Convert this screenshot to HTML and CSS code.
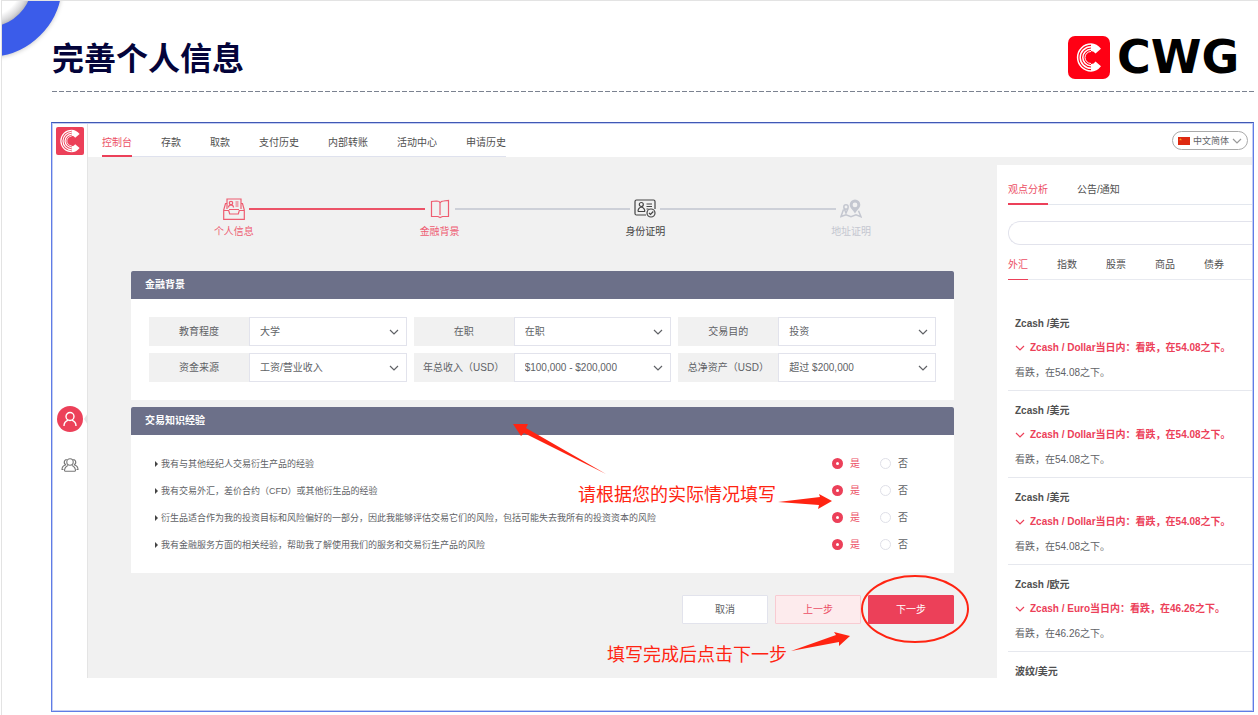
FILE: index.html
```html
<!DOCTYPE html>
<html lang="zh-CN">
<head>
<meta charset="utf-8">
<meta name="viewport" content="width=device-width, initial-scale=1">
<title>完善个人信息</title>
<link rel="stylesheet" href="styles.css">
</head>
<body>
<svg class="sprite" width="0" height="0" aria-hidden="true">
  <symbol id="chevron" viewBox="0 0 10 10"><path d="M1 3l4 4 4-4" fill="none" stroke="currentColor" stroke-width="1.200"/></symbol>
  <symbol id="mark" viewBox="0 0 42 43">
    <g fill="none" stroke="#fff" stroke-width="1.500">
      <path d="M23 8.100A13.400 13.400 0 0 0 23 34.900"/>
      <path d="M23 10.700A10.800 10.800 0 0 0 23 32.300"/>
      <path d="M23 13.300A8.200 8.200 0 0 0 23 29.700"/>
      <path d="M23 15.500A6 6 0 0 0 23 27.500" stroke-width="1"/>
    </g>
    <path d="M23 7.300Q29 7.600 33 12.800L27.500 17.500Q26 15 23 15zM23 35.700Q29 35.400 33 30.200L27.500 25.500Q26 28 23 28z" fill="#fff"/>
  </symbol>
</svg>
<div class="slide">
  <svg class="ring" width="72" height="68" viewBox="0 0 72 68" aria-hidden="true">
    <defs><radialGradient id="hole" cx="-14" cy="-18" r="46" gradientUnits="userSpaceOnUse">
      <stop offset=".72" stop-color="#fff"/><stop offset="1" stop-color="#bdbdc0"/>
    </radialGradient></defs>
    <circle cx="-14" cy="-18" r="46" fill="url(#hole)"/>
    <circle class="ring-band" cx="-14" cy="-18" r="59" fill="none" stroke="#3b5cea" stroke-width="30"/>
  </svg>

  <header class="slide-head">
    <h1 class="slide-title">完善个人信息</h1>
    <div class="brand">
      <svg class="brand-mark" width="42" height="43" viewBox="0 0 42 43" aria-hidden="true">
        <rect width="42" height="43" rx="7" fill="#ff0014"/><use href="#mark"/>
      </svg>
      <span class="brand-name">CWG</span>
    </div>
  </header>

  <div class="frame">
    <div class="app">
      <aside class="rail">
        <svg class="rail-logo" width="28" height="28" viewBox="0 0 28 28" aria-hidden="true">
          <rect width="28" height="28" rx="2" fill="#ec4059"/>
          <svg width="28" height="28" viewBox="4 4 34 35"><use href="#mark" width="42" height="43"/></svg>
        </svg>
        <nav class="rail-nav" aria-label="侧栏">
          <a class="rail-link rail-link-active" href="#" aria-label="个人">
            <svg width="16" height="16" viewBox="0 0 16 16" fill="none" stroke="#fff" stroke-width="1.400"><circle cx="8" cy="5.500" r="4"/><path d="M2 15q0-4 4-5.800M14 15q0-4-4-5.800"/></svg>
          </a>
          <a class="rail-link" href="#" aria-label="团队">
            <svg width="18" height="16" viewBox="0 0 18 16" fill="none" stroke="#777" stroke-width="1.100"><circle cx="9" cy="5" r="3.200"/><path d="M3.500 14q0-4 3.500-5.500M14.500 14q0-4-3.500-5.500M3.500 14.200h11M5 8Q2.500 6.500 3.500 4q.8-1.500 2.300-1.300M13 8q2.500-1.500 1.500-4-.8-1.500-2.300-1.300M4.500 8Q1 9 1 12.500h1.500M13.500 8Q17 9 17 12.500h-1.500"/></svg>
          </a>
        </nav>
      </aside>

      <div class="topbar">
        <nav class="tabs topnav" aria-label="主菜单">
          <a class="tab tab-active" href="#">控制台</a>
          <a class="tab" href="#">存款</a>
          <a class="tab" href="#">取款</a>
          <a class="tab" href="#">支付历史</a>
          <a class="tab" href="#">内部转账</a>
          <a class="tab" href="#">活动中心</a>
          <a class="tab" href="#">申请历史</a>
        </nav>
        <button class="lang" type="button">
          <svg width="12" height="8" viewBox="0 0 12 8" aria-hidden="true"><rect width="12" height="8" fill="#de2910"/><path d="M2.500 1l.4 1h1l-.8.7.3 1-.9-.6-.9.6.3-1-.8-.7h1z" fill="#f8a01c"/></svg>
          <span>中文简体</span>
          <svg class="lang-arrow" width="10" height="10" aria-hidden="true"><use href="#chevron"/></svg>
        </button>
      </div>

      <main class="main">
        <ol class="steps">
          <li class="step step-done">
            <div class="step-track"><svg class="step-icon" width="22" height="22" viewBox="0 0 22 22" fill="none" stroke="currentColor" stroke-width="1.200" aria-hidden="true"><path d="M4 11V1h14v10M3.500 5.500h-1L.7 12v9.300h20.600V12l-1.800-6.500h-1M.7 12.500h5l1 3.500h8.600l1-3.500h5M6 11.500h10M12.500 4h3M12.500 6h3M12.500 8h3"/><circle cx="8" cy="5" r="1.700"/><path d="M5.500 9.500q0-2.500 2.500-2.700 2.500.2 2.500 2.700"/></svg></div>
            <span>个人信息</span>
          </li>
          <li class="step step-current">
            <div class="step-track"><svg class="step-icon" width="22" height="22" viewBox="0 0 22 22" fill="none" stroke="currentColor" stroke-width="1.200" aria-hidden="true"><path d="M11 19.500l-2-1H2.500v-15l5-.5Q11 3 11 5q1-2 3.500-2l5-.5v16h-6zM11 5v12"/></svg></div>
            <span>金融背景</span>
          </li>
          <li class="step step-next">
            <div class="step-track"><svg class="step-icon" width="22" height="22" viewBox="0 0 22 22" fill="none" stroke="currentColor" stroke-width="1.200" aria-hidden="true"><path d="M12 17H2.500Q1 17 1 15.500v-12Q1 2 2.500 2h17Q21 2 21 3.500V11M12.500 6H18M12.500 8.500H18M12.500 11h2M4 13.500h7"/><circle cx="7.300" cy="6.500" r="2"/><path d="M4 13.500q0-3.500 3.300-4.500 3.500 1 3.500 4.500"/><circle cx="17" cy="15" r="4"/><path d="M15 15l1.500 1.500 2.800-3"/></svg></div>
            <span>身份证明</span>
          </li>
          <li class="step step-later">
            <div class="step-track"><svg class="step-icon" width="22" height="22" viewBox="0 0 22 22" fill="none" stroke="currentColor" stroke-width="1.500" aria-hidden="true"><circle cx="6" cy="9" r="2.200"/><path d="M3.500 11.500L1 18.500l5-1.700 5 2 5-2 5 2-2.500-6M4.200 10.500L6 15l2-4.500"/><path fill="currentColor" fill-rule="evenodd" stroke="none" d="M15 1.500a5.300 5.300 0 0 1 5.300 5.300C20.300 10 17 12 15 15.500 13 12 9.700 10 9.700 6.800A5.300 5.300 0 0 1 15 1.500zm0 3a2.400 2.400 0 1 0 0 4.800 2.400 2.400 0 0 0 0-4.800z"/></svg></div>
            <span>地址证明</span>
          </li>
        </ol>

        <section class="card">
          <h2 class="card-head">金融背景</h2>
          <div class="fields">
            <div class="field"><label class="field-label" for="edu">教育程度</label><div class="field-box"><select class="field-select" id="edu"><option>大学</option></select><svg class="field-arrow" width="10" height="10" aria-hidden="true"><use href="#chevron"/></svg></div></div>
            <div class="field"><label class="field-label" for="job">在职</label><div class="field-box"><select class="field-select" id="job"><option>在职</option></select><svg class="field-arrow" width="10" height="10" aria-hidden="true"><use href="#chevron"/></svg></div></div>
            <div class="field"><label class="field-label" for="goal">交易目的</label><div class="field-box"><select class="field-select" id="goal"><option>投资</option></select><svg class="field-arrow" width="10" height="10" aria-hidden="true"><use href="#chevron"/></svg></div></div>
            <div class="field"><label class="field-label" for="source">资金来源</label><div class="field-box"><select class="field-select" id="source"><option>工资/营业收入</option></select><svg class="field-arrow" width="10" height="10" aria-hidden="true"><use href="#chevron"/></svg></div></div>
            <div class="field"><label class="field-label" for="income">年总收入（USD）</label><div class="field-box"><select class="field-select" id="income"><option>$100,000 - $200,000</option></select><svg class="field-arrow" width="10" height="10" aria-hidden="true"><use href="#chevron"/></svg></div></div>
            <div class="field"><label class="field-label" for="assets">总净资产（USD）</label><div class="field-box"><select class="field-select" id="assets"><option>超过 $200,000</option></select><svg class="field-arrow" width="10" height="10" aria-hidden="true"><use href="#chevron"/></svg></div></div>
          </div>
        </section>

        <section class="card">
          <h2 class="card-head">交易知识经验</h2>
          <div class="questions">
            <div class="question" role="radiogroup" aria-labelledby="q1"><p class="question-text" id="q1">我有与其他经纪人交易衍生产品的经验</p>
              <label class="choice"><input class="radio" type="radio" name="q1" checked><span>是</span></label><label class="choice"><input class="radio" type="radio" name="q1"><span>否</span></label></div>
            <div class="question" role="radiogroup" aria-labelledby="q2"><p class="question-text" id="q2">我有交易外汇，差价合约（CFD）或其他衍生品的经验</p>
              <label class="choice"><input class="radio" type="radio" name="q2" checked><span>是</span></label><label class="choice"><input class="radio" type="radio" name="q2"><span>否</span></label></div>
            <div class="question" role="radiogroup" aria-labelledby="q3"><p class="question-text" id="q3">衍生品适合作为我的投资目标和风险偏好的一部分，因此我能够评估交易它们的风险，包括可能失去我所有的投资资本的风险</p>
              <label class="choice"><input class="radio" type="radio" name="q3" checked><span>是</span></label><label class="choice"><input class="radio" type="radio" name="q3"><span>否</span></label></div>
            <div class="question" role="radiogroup" aria-labelledby="q4"><p class="question-text" id="q4">我有金融服务方面的相关经验，帮助我了解使用我们的服务和交易衍生产品的风险</p>
              <label class="choice"><input class="radio" type="radio" name="q4" checked><span>是</span></label><label class="choice"><input class="radio" type="radio" name="q4"><span>否</span></label></div>
          </div>
          <svg class="note note-fill" width="319" height="86" viewBox="0 0 319 86">
            <path d="M0 0H15L13 4 93 50 11 9 8 12z"/><path d="M265 78L307 73 306 70 319 77 305 85 306 81z"/>
            <text x="65" y="77">请根据您的实际情况填写</text>
          </svg>
        </section>

        <div class="actions">
          <button class="btn" type="button">取消</button>
          <button class="btn btn-soft" type="button">上一步</button>
          <button class="btn btn-primary" type="button">下一步</button>
          <svg class="note note-next" width="363" height="92" viewBox="0 0 363 92">
            <ellipse cx="309" cy="35" rx="53" ry="33"/>
            <path d="M185 77L230 61 228 58 244 62 233 72 233 68z"/>
            <text x="1" y="87">填写完成后点击下一步</text>
          </svg>
        </div>
      </main>

      <aside class="panel">
        <nav class="tabs panel-tabs" aria-label="资讯"><a class="tab tab-active" href="#">观点分析</a><a class="tab" href="#">公告/通知</a></nav>
        <input class="search" type="search" aria-label="搜索">
        <nav class="tabs market-tabs" aria-label="市场"><a class="tab tab-active" href="#">外汇</a><a class="tab" href="#">指数</a><a class="tab" href="#">股票</a><a class="tab" href="#">商品</a><a class="tab" href="#">债券</a></nav>
        <div class="news">
          <article class="item"><h3 class="item-title">Zcash /美元</h3><p class="item-lead"><svg width="10" height="10" aria-hidden="true"><use href="#chevron"/></svg>Zcash / Dollar当日内：看跌，在54.08之下。</p><p class="item-text">看跌，在54.08之下。</p></article>
          <article class="item"><h3 class="item-title">Zcash /美元</h3><p class="item-lead"><svg width="10" height="10" aria-hidden="true"><use href="#chevron"/></svg>Zcash / Dollar当日内：看跌，在54.08之下。</p><p class="item-text">看跌，在54.08之下。</p></article>
          <article class="item"><h3 class="item-title">Zcash /美元</h3><p class="item-lead"><svg width="10" height="10" aria-hidden="true"><use href="#chevron"/></svg>Zcash / Dollar当日内：看跌，在54.08之下。</p><p class="item-text">看跌，在54.08之下。</p></article>
          <article class="item"><h3 class="item-title">Zcash /欧元</h3><p class="item-lead"><svg width="10" height="10" aria-hidden="true"><use href="#chevron"/></svg>Zcash / Euro当日内：看跌，在46.26之下。</p><p class="item-text">看跌，在46.26之下。</p></article>
          <article class="item"><h3 class="item-title">波纹/美元</h3></article>
        </div>
      </aside>
    </div>
  </div>
</div>
</body>
</html>
```

FILE: styles.css
```css
* { box-sizing: border-box; }

body {
  margin: 0;
  background: #fff;
  color: #606266;
  font: 10px/16px "Liberation Sans", "Noto Sans CJK SC", sans-serif;
}

h1, h2, h3, p, ol { margin: 0; padding: 0; }
a { color: inherit; text-decoration: none; }
button, input, select { font: inherit; color: inherit; }
.sprite { position: absolute; }

.slide {
  position: relative;
  margin-left: 1px;
  padding: 0 4px 3px 49px;
  border-top: 1px solid #e3e3e3;
  border-left: 1px solid #e3e3e3;
}

.ring { position: absolute; top: 0; left: 0; }
.ring-band { filter: drop-shadow(0 1px 2px rgba(0, 0, 0, .2)); }

.slide-head {
  display: flex;
  align-items: flex-start;
  justify-content: space-between;
  height: 91px;
  margin-left: 1px;
  padding-top: 35px;
  background: repeating-linear-gradient(90deg, #7b8290 0 5px, transparent 5px 7px) bottom / 100% 1px no-repeat;
}
.slide-title {
  color: #04043a;
  font: 700 32px/40px "Noto Sans CJK SC", sans-serif;
}
.brand { display: flex; align-items: center; gap: 7px; }
.brand-mark { display: block; }
.brand-name {
  width: 137px;
  color: #000;
  font: 700 46px/43px "DejaVu Sans", sans-serif;
}

.frame {
  margin-top: 30px;
  padding: 1px 1px 33px;
  border: 1px solid #5f7ce6;
  border-top-color: #4058b4;
  box-shadow: inset 0 0 0 1px #c3cdf3;
}

.app {
  display: grid;
  grid-template-columns: 35px minmax(0, 1fr) 255px;
  grid-template-rows: 33px auto;
  background: #f1f1f1;
}

.rail {
  grid-row: 1 / 3;
  display: flex;
  flex-direction: column;
  align-items: center;
  padding-top: 3px;
  border-right: 1px solid #e4e4e4;
  background: #fff;
}
.rail-logo { display: block; }
.rail-nav {
  display: flex;
  flex-direction: column;
  align-items: center;
  gap: 20px;
  width: 100%;
  margin-top: 251px;
}
.rail-link {
  display: grid;
  place-items: center;
  width: 26px;
  height: 26px;
  border-radius: 50%;
}
.rail-link-active { position: relative; background: #ec4059; }
.rail-link-active::after {
  content: "";
  position: absolute;
  left: 27px;
  top: 7px;
  border: 6px solid transparent;
  border-left: 0;
  border-right: 4px solid #e4e4e4;
}

.topbar {
  grid-column: 2 / 4;
  display: flex;
  align-items: center;
  justify-content: space-between;
  padding: 0 4px 0 14px;
  background: #fff;
}

.tabs { display: flex; gap: 29px; color: #505050; }
.tab { white-space: nowrap; border-bottom: 2px solid transparent; }
.tab-active { color: #ec4f66; border-color: #ec4059; }

.topnav { align-self: stretch; box-shadow: inset 0 -1px #dfe2ee; }
.topnav .tab { padding-top: 11px; }

.lang {
  display: flex;
  align-items: center;
  gap: 3px;
  height: 19px;
  padding: 0 5px;
  border: 1px solid #aaa;
  border-radius: 10px;
  background: #fff;
  font-size: 9px;
}
.lang-arrow { color: #999; }

.main { padding: 38px 43px 54px; }

.steps { display: grid; grid-template-columns: repeat(4, 1fr); list-style: none; }
.step { display: grid; gap: 1px; text-align: center; }
.step-track { display: flex; align-items: center; height: 28px; }
.step-icon { flex: none; margin: 0 4px; }
.step-track::before, .step-track::after {
  content: "";
  flex: 1;
  height: 2px;
  background: #cdd0d8;
}
.step:first-child .step-track::before,
.step:last-child .step-track::after { background: transparent; }
.step-done .step-track::after, .step-current .step-track::before { background: #ec5368; }
.step-done, .step-current { color: #ee5d71; }
.step-next { color: #444; }
.step-later { color: #c4c7d0; }

.card { position: relative; background: #fff; }
.steps + .card { margin-top: 31px; }
.card + .card { margin-top: 7px; }
.card-head {
  height: 28px;
  padding-left: 14px;
  border-radius: 2px 2px 0 0;
  background: #6c7089;
  color: #fff;
  font-size: 10px;
  line-height: 28px;
}

.fields { display: grid; grid-template-columns: repeat(3, 1fr); gap: 7px; padding: 18px; }
.field { display: flex; height: 29px; }
.field-label { flex: 0 0 100px; background: #f1f1f1; text-align: center; line-height: 29px; white-space: nowrap; }
.field-box { flex: 1; display: grid; align-items: center; min-width: 0; }
.field-select {
  grid-area: 1 / 1;
  width: 100%;
  height: 29px;
  padding: 0 24px 0 10px;
  border: 1px solid #e2e3ec;
  border-radius: 0;
  background: #fff;
  appearance: none;
}
.field-arrow { grid-area: 1 / 1; justify-self: end; margin-right: 8px; pointer-events: none; }

.questions { padding: 15px 46px 15px 24px; }
.question { display: flex; align-items: center; gap: 20px; height: 27px; }
.question-text { flex: 1; font-size: 9px; white-space: nowrap; }
.question-text::before {
  content: "";
  display: inline-block;
  margin-right: 3px;
  border: 3px solid transparent;
  border-left-color: #444;
  border-right: 0;
}
.choice { display: flex; align-items: center; gap: 7px; }
.radio {
  appearance: none;
  width: 11px;
  height: 11px;
  margin: 0;
  border: 1px solid #dfe0e8;
  border-radius: 50%;
  background: #fff;
}
.radio:checked { border: 4px solid #ec4059; }
.radio:checked + span { color: #ec4f66; }

.actions { position: relative; display: flex; justify-content: flex-end; gap: 7px; margin-top: 22px; }
.btn {
  width: 86px;
  height: 29px;
  padding: 0;
  border: 1px solid #e2e3ec;
  border-radius: 1px;
  background: #fff;
}
.btn-soft { border-color: #f8cbd2; background: #fdebed; color: #ec4f66; }
.btn-primary { border-color: #ec4059; background: #ec4059; color: #fff; }

.note {
  position: absolute;
  overflow: visible;
  fill: #ff2412;
  font: 18px/24px "Noto Sans CJK SC", sans-serif;
  pointer-events: none;
}
.note ellipse { fill: none; stroke: #ff2412; stroke-width: 2; }
.note-fill { top: 17px; right: 122px; }
.note-next { top: -21px; right: -15px; }

.panel {
  contain: size;
  overflow: hidden;
  margin-top: 8px;
  padding: 17px 0 0 11px;
  background: #fff;
}
.panel-tabs { height: 23px; box-shadow: inset 0 -1px #e3e7ee; }
.panel-tabs .tab, .market-tabs .tab { height: 100%; }
.search {
  display: block;
  width: 100%;
  height: 24px;
  margin: 16px 0 12px;
  padding: 0 12px;
  border: 1px solid #e2e3ec;
  border-right: 0;
  border-radius: 12px 0 0 12px;
  background: #fff;
}
.market-tabs { height: 23px; box-shadow: inset 0 -1px #e8eaf0; }
.market-tabs .tab { border-bottom-width: 1px; }

.news { padding-top: 24px; }
.item { height: 87px; padding: 12px 0 0 7px; border-bottom: 1px solid #e6e8ee; }
.item-title { font-size: 10px; line-height: 16px; color: #505050; }
.item-lead {
  display: flex;
  align-items: center;
  gap: 5px;
  margin: 8px 0 9px;
  color: #ec4059;
  font-weight: 700;
  white-space: nowrap;
}
```
